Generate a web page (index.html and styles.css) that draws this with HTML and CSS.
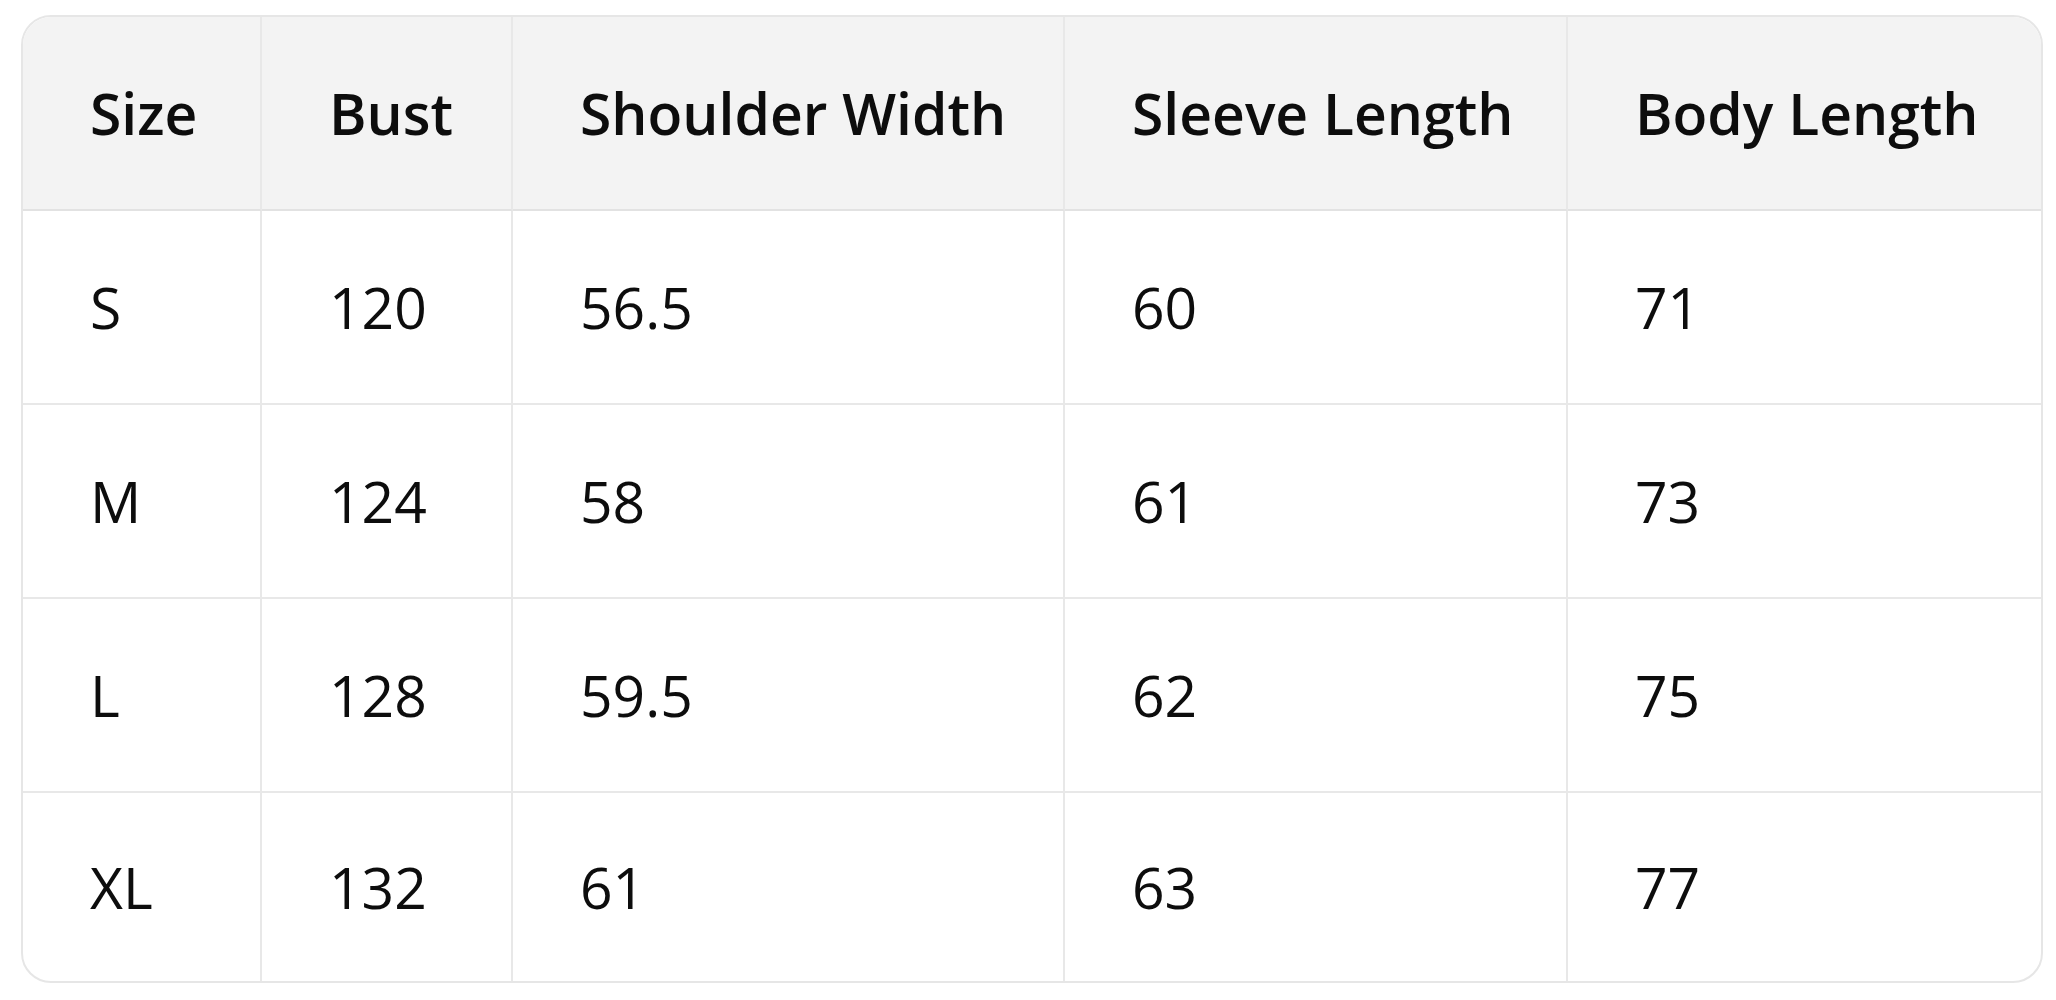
FILE: index.html
```html
<!DOCTYPE html>
<html lang="en">
<head>
<meta charset="utf-8">
<title>Size Chart</title>
<link rel="stylesheet" href="styles.css">
</head>
<body>
<div class="table-wrap">
  <table class="size-table">
    <colgroup>
      <col class="c-size">
      <col class="c-bust">
      <col class="c-shoulder">
      <col class="c-sleeve">
      <col class="c-body">
    </colgroup>
    <thead>
      <tr>
        <th>Size</th>
        <th>Bust</th>
        <th>Shoulder Width</th>
        <th>Sleeve Length</th>
        <th>Body Length</th>
      </tr>
    </thead>
    <tbody>
      <tr><td>S</td><td>120</td><td>56.5</td><td>60</td><td>71</td></tr>
      <tr><td>M</td><td>124</td><td>58</td><td>61</td><td>73</td></tr>
      <tr><td>L</td><td>128</td><td>59.5</td><td>62</td><td>75</td></tr>
      <tr class="last"><td>XL</td><td>132</td><td>61</td><td>63</td><td>77</td></tr>
    </tbody>
  </table>
</div>
</body>
</html>
```

FILE: styles.css
```css
html, body {
  margin: 0;
  padding: 0;
  background: #ffffff;
}

body {
  font-family: "Open Sans", "Noto Sans", "Liberation Sans", sans-serif;
  color: #0d0d0d;
}

.table-wrap {
  margin: 15px 0 0 21px;
  width: 2018px;
  border: 2px solid #e6e6e6;
  border-radius: 30px;
  overflow: hidden;
}

.size-table {
  width: 2018px;
  table-layout: fixed;
  border-collapse: separate;
  border-spacing: 0;
}

.c-size { width: 239px; }
.c-bust { width: 251px; }
.c-shoulder { width: 552px; }
.c-sleeve { width: 503px; }
.c-body { width: 473px; }

.size-table th,
.size-table td {
  text-align: left;
  vertical-align: middle;
  padding: 0 0 0 67px;
  border-right: 2px solid #e8e8e8;
  border-bottom: 2px solid #e8e8e8;
  white-space: nowrap;
}

.size-table th:last-child,
.size-table td:last-child {
  border-right: none;
}

.size-table tbody tr.last td {
  border-bottom: none;
}

.size-table thead tr {
  height: 194px;
}

.size-table th {
  background: #f3f3f3;
  font-weight: 600;
  font-size: 57px;
  border-bottom-color: #e2e2e2;
}

.size-table tbody tr {
  height: 194px;
}

.size-table tbody tr.last {
  height: 188px;
}

.size-table td {
  font-weight: 400;
  font-size: 57px;
}
```
